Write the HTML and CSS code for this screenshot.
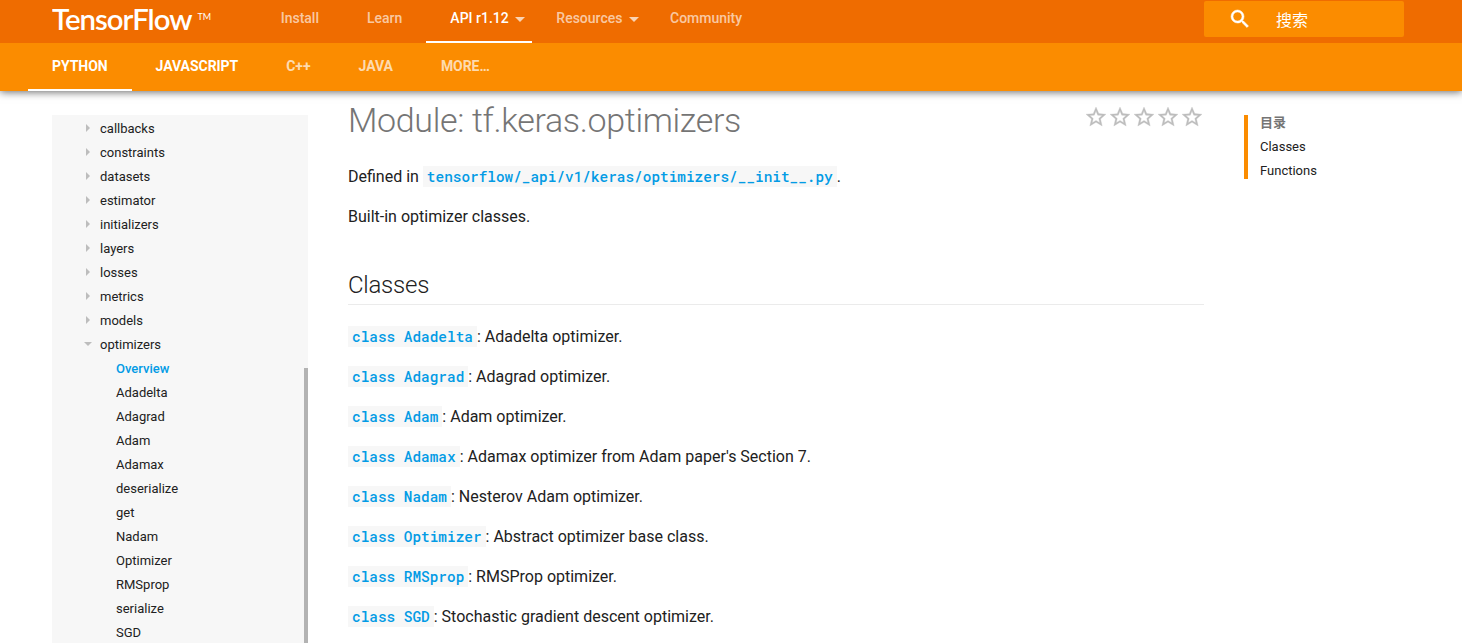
FILE: index.html
```html
<!DOCTYPE html>
<html lang="en">
<head>
<meta charset="utf-8">
<title>Module: tf.keras.optimizers | TensorFlow</title>
<link rel="stylesheet" href="styles.css">
</head>
<body>
<header class="header">
  <div class="top-row">
    <div class="logo">
      <svg width="142" height="43" viewBox="0 0 142 43"><text class="logo-name" x="0" y="29.7" textLength="139.5" lengthAdjust="spacingAndGlyphs">TensorFlow</text></svg>
      <svg width="28" height="43" viewBox="0 0 28 43"><text class="logo-tm" x="3.5" y="20">TM</text></svg>
    </div>
    <nav class="top-nav">
      <a class="top-tab">Install</a>
      <a class="top-tab">Learn</a>
      <a class="top-tab menu active">API r1.12<i class="caret"></i></a>
      <a class="top-tab menu">Resources<i class="caret"></i></a>
      <a class="top-tab">Community</a>
    </nav>
    <div class="search">
      <svg class="search-icon" width="24" height="24" viewBox="0 0 24 24"><path fill="#fff" stroke="#fff" stroke-width=".5" d="M15.5 14h-.79l-.28-.27A6.47 6.47 0 0 0 16 9.5 6.5 6.5 0 1 0 9.5 16c1.61 0 3.09-.59 4.23-1.57l.27.28v.79l5 4.99L20.49 19l-4.99-5zm-6 0C7.01 14 5 11.99 5 9.5S7.01 5 9.5 5 14 7.01 14 9.5 11.99 14 9.5 14z"/></svg>
      <span>搜索</span>
    </div>
  </div>
  <nav class="lower-row">
    <a class="lower-tab active">PYTHON</a>
    <a class="lower-tab bright">JAVASCRIPT</a>
    <a class="lower-tab">C++</a>
    <a class="lower-tab">JAVA</a>
    <a class="lower-tab">MORE…</a>
  </nav>
</header>
<div class="page">
  <aside class="sidebar">
    <ul class="tree">
      <li class="node">callbacks</li>
      <li class="node">constraints</li>
      <li class="node">datasets</li>
      <li class="node">estimator</li>
      <li class="node">initializers</li>
      <li class="node">layers</li>
      <li class="node">losses</li>
      <li class="node">metrics</li>
      <li class="node">models</li>
      <li class="node open">optimizers</li>
      <li class="leaf current">Overview</li>
      <li class="leaf">Adadelta</li>
      <li class="leaf">Adagrad</li>
      <li class="leaf">Adam</li>
      <li class="leaf">Adamax</li>
      <li class="leaf">deserialize</li>
      <li class="leaf">get</li>
      <li class="leaf">Nadam</li>
      <li class="leaf">Optimizer</li>
      <li class="leaf">RMSprop</li>
      <li class="leaf">serialize</li>
      <li class="leaf">SGD</li>
    </ul>
    <div class="scroll-thumb"></div>
  </aside>
  <main class="article">
    <div class="title-row">
      <h1>Module: tf.keras.optimizers</h1>
      <div class="stars">
        <svg class="star" viewBox="0 0 24 24"><path d="M22 9.24l-7.19-.62L12 2 9.19 8.63 2 9.24l5.46 4.73L5.82 21 12 17.27 18.18 21l-1.63-7.03L22 9.24zM12 15.4l-3.76 2.27 1-4.28-3.32-2.88 4.38-.38L12 6.1l1.71 4.04 4.38.38-3.32 2.88 1 4.28L12 15.4z"/></svg>
        <svg class="star" viewBox="0 0 24 24"><path d="M22 9.24l-7.19-.62L12 2 9.19 8.63 2 9.24l5.46 4.73L5.82 21 12 17.27 18.18 21l-1.63-7.03L22 9.24zM12 15.4l-3.76 2.27 1-4.28-3.32-2.88 4.38-.38L12 6.1l1.71 4.04 4.38.38-3.32 2.88 1 4.28L12 15.4z"/></svg>
        <svg class="star" viewBox="0 0 24 24"><path d="M22 9.24l-7.19-.62L12 2 9.19 8.63 2 9.24l5.46 4.73L5.82 21 12 17.27 18.18 21l-1.63-7.03L22 9.24zM12 15.4l-3.76 2.27 1-4.28-3.32-2.88 4.38-.38L12 6.1l1.71 4.04 4.38.38-3.32 2.88 1 4.28L12 15.4z"/></svg>
        <svg class="star" viewBox="0 0 24 24"><path d="M22 9.24l-7.19-.62L12 2 9.19 8.63 2 9.24l5.46 4.73L5.82 21 12 17.27 18.18 21l-1.63-7.03L22 9.24zM12 15.4l-3.76 2.27 1-4.28-3.32-2.88 4.38-.38L12 6.1l1.71 4.04 4.38.38-3.32 2.88 1 4.28L12 15.4z"/></svg>
        <svg class="star" viewBox="0 0 24 24"><path d="M22 9.24l-7.19-.62L12 2 9.19 8.63 2 9.24l5.46 4.73L5.82 21 12 17.27 18.18 21l-1.63-7.03L22 9.24zM12 15.4l-3.76 2.27 1-4.28-3.32-2.88 4.38-.38L12 6.1l1.71 4.04 4.38.38-3.32 2.88 1 4.28L12 15.4z"/></svg>
      </div>
    </div>
    <p>Defined in <code>tensorflow/_api/v1/keras/optimizers/__init__.py</code>.</p>
    <p>Built-in optimizer classes.</p>
    <h2>Classes</h2>
    <p><code>class Adadelta</code>: Adadelta optimizer.</p>
    <p><code>class Adagrad</code>: Adagrad optimizer.</p>
    <p><code>class Adam</code>: Adam optimizer.</p>
    <p><code>class Adamax</code>: Adamax optimizer from Adam paper's Section 7.</p>
    <p><code>class Nadam</code>: Nesterov Adam optimizer.</p>
    <p><code>class Optimizer</code>: Abstract optimizer base class.</p>
    <p><code>class RMSprop</code>: RMSProp optimizer.</p>
    <p><code>class SGD</code>: Stochastic gradient descent optimizer.</p>
  </main>
  <aside class="toc">
    <div class="toc-title">目录</div>
    <a>Classes</a>
    <a>Functions</a>
  </aside>
</div>
</body>
</html>
```
FILE: styles.css
```css
*, *::before { box-sizing: border-box; }
body {
  margin: 0;
  height: 643px;
  overflow: hidden;
  display: flex;
  flex-direction: column;
  background: #fff;
  color: #212121;
  font-family: Roboto, "Noto Sans CJK SC", sans-serif;
}
.header {
  position: relative;
  z-index: 1;
  flex: none;
  box-shadow: 0 1px 8px rgba(0, 0, 0, .6);
}
.top-row {
  display: flex;
  height: 43px;
  padding-left: 52px;
  background: #ef6c00;
}
.logo { display: flex; flex: none; margin-right: 34.7px; fill: #fff; }
.logo-name { font: 600 29.5px Lato, sans-serif; letter-spacing: -1px; }
.logo-tm { font: 9px Lato, sans-serif; }
.top-nav { display: flex; }
.top-tab {
  display: flex;
  align-items: center;
  padding: 0 24px 7px;
  font-size: 14px;
  font-weight: 500;
  color: rgba(255, 255, 255, .65);
}
.top-tab.menu { gap: 6.6px; padding-right: 7px; }
.top-tab.active { color: #fff; box-shadow: inset 0 -2px #fff; }
.caret {
  margin-top: 3px;
  border: 5px solid transparent;
  border-top-color: rgba(255, 255, 255, .7);
  border-bottom: 0;
}
.search {
  display: flex;
  align-items: center;
  gap: 24px;
  width: 200px;
  height: 36px;
  margin: 1px 58px 0 auto;
  padding-left: 24px;
  border-radius: 2px;
  background: #fb8c00;
  color: #fff;
  font-size: 16px;
}
.lower-row {
  display: flex;
  height: 48px;
  padding-left: 28px;
  background: #fb8c00;
}
.lower-tab {
  padding: 0 24px;
  line-height: 47px;
  font-size: 14px;
  font-weight: 700;
  letter-spacing: -.05px;
  color: rgba(255, 255, 255, .7);
}
.lower-tab.active { color: #fff; box-shadow: inset 0 -2px #fff; }
.lower-tab.bright { color: #fff; }
.page { display: flex; flex: 1; min-height: 0; padding-left: 52px; }
.sidebar {
  display: flex;
  width: 256px;
  margin: 24px 40px 0 0;
  padding-top: 2px;
  background: #f7f7f7;
  overflow: hidden;
}
.tree { flex: 1; margin: 0; padding: 0; list-style: none; font-size: 13px; line-height: 24px; }
.node { display: flex; align-items: center; height: 24px; padding-left: 34px; }
.node::before {
  content: "";
  width: 4px;
  margin: -2px 10px 0 0;
  border: 4px solid transparent;
  border-left-color: #bdbdbd;
  border-right: 0;
}
.node.open { padding-left: 32px; }
.node.open::before {
  width: 8px;
  margin-right: 8px;
  border: 4px solid transparent;
  border-top-color: #bdbdbd;
  border-bottom: 0;
}
.leaf { height: 24px; padding-left: 64px; }
.leaf.current { color: #039be5; font-weight: 500; }
.scroll-thumb { width: 4px; margin-top: 251px; background: #b3b3b3; }
.article { width: 856px; padding-top: 9px; }
.title-row { display: flex; justify-content: space-between; margin-bottom: 25px; }
h1 { margin: 0; font-size: 34px; font-weight: 300; line-height: 40px; letter-spacing: -.01em; color: #757575; }
.stars { display: flex; padding-top: 5px; }
.star { width: 24px; height: 24px; fill: #bdbdbd; stroke: #bdbdbd; stroke-width: .3; }
p { margin: 0 0 16px; font-size: 16px; line-height: 24px; }
h2 {
  margin: 40px 0 20px;
  padding-bottom: 3px;
  border-bottom: 1px solid #ebebeb;
  font-size: 24px;
  font-weight: 300;
  line-height: 32px;
  letter-spacing: -.01em;
}
code {
  padding: 1px 4px;
  background: #f7f7f7;
  color: #039be5;
  font: 500 14.4px/1 "Roboto Mono", "Liberation Mono", monospace;
}
.toc {
  display: flex;
  flex-direction: column;
  height: 64px;
  margin: 24px 0 0 40px;
  padding-left: 12px;
  border-left: 4px solid #fb8c00;
  font-size: 13px;
  line-height: 24px;
}
.toc-title { margin-top: -4px; color: #757575; font-weight: 700; }
```
